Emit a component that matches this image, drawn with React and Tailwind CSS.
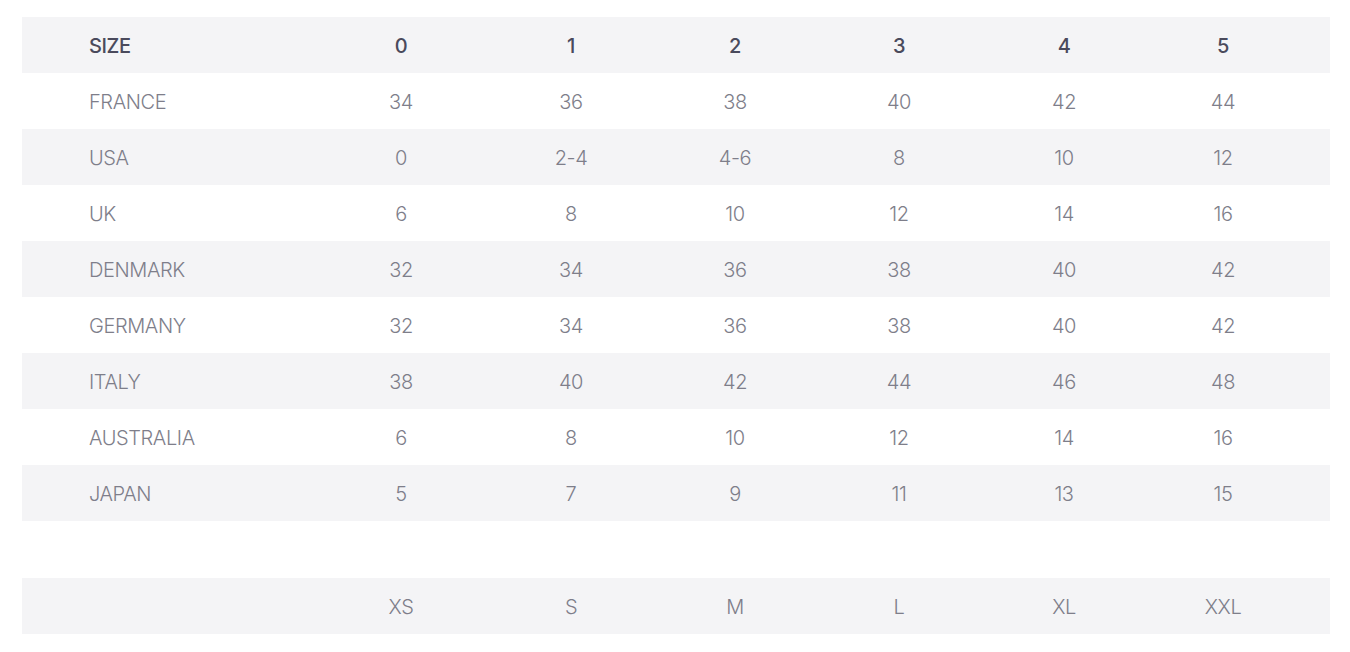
import React from 'react';

const cols = ['w-[170px]', 'w-[170px]', 'w-[158px]', 'w-[170px]', 'w-[160px]', 'w-[158px]'];

const rows = [
  ['FRANCE', '34', '36', '38', '40', '42', '44'],
  ['USA', '0', '2-4', '4-6', '8', '10', '12'],
  ['UK', '6', '8', '10', '12', '14', '16'],
  ['DENMARK', '32', '34', '36', '38', '40', '42'],
  ['GERMANY', '32', '34', '36', '38', '40', '42'],
  ['ITALY', '38', '40', '42', '44', '46', '48'],
  ['AUSTRALIA', '6', '8', '10', '12', '14', '16'],
  ['JAPAN', '5', '7', '9', '11', '13', '15'],
];

const Row = ({ cells, gray, head }) => (
  <div className={`flex items-center h-[56px] pt-[2px] ${gray ? 'bg-[#f4f4f6]' : 'bg-white'}`}>
    <div className={`w-[294px] pl-[67px] ${head ? 'text-[#4a4a5c] font-medium' : 'text-[#7e7e8a]'}`}>
      {cells[0]}
    </div>
    {cells.slice(1).map((c, i) => (
      <div key={i}
           className={`${cols[i]} text-center ${head ? 'text-[#4a4a5c] font-medium' : 'text-[#7e7e8a]'}`}>
        {c}
      </div>
    ))}
  </div>
);

const App = () => {
  return (
    <div className="w-[1350px] h-[652px] bg-white pt-[17px] pl-[22px] pr-[20px]"
         style={{ fontFamily: 'Inter, "Noto Sans", sans-serif' }}>
      <div className="flex flex-col text-[20px] tracking-[-0.02em] font-light">
        <Row cells={['SIZE', '0', '1', '2', '3', '4', '5']} gray head />
        {rows.map((r, i) => (
          <Row key={r[0]} cells={r} gray={i % 2 === 1} />
        ))}
        <div className="h-[57px]"></div>
        <Row cells={['', 'XS', 'S', 'M', 'L', 'XL', 'XXL']} gray />
      </div>
    </div>
  );
};

export default App;
